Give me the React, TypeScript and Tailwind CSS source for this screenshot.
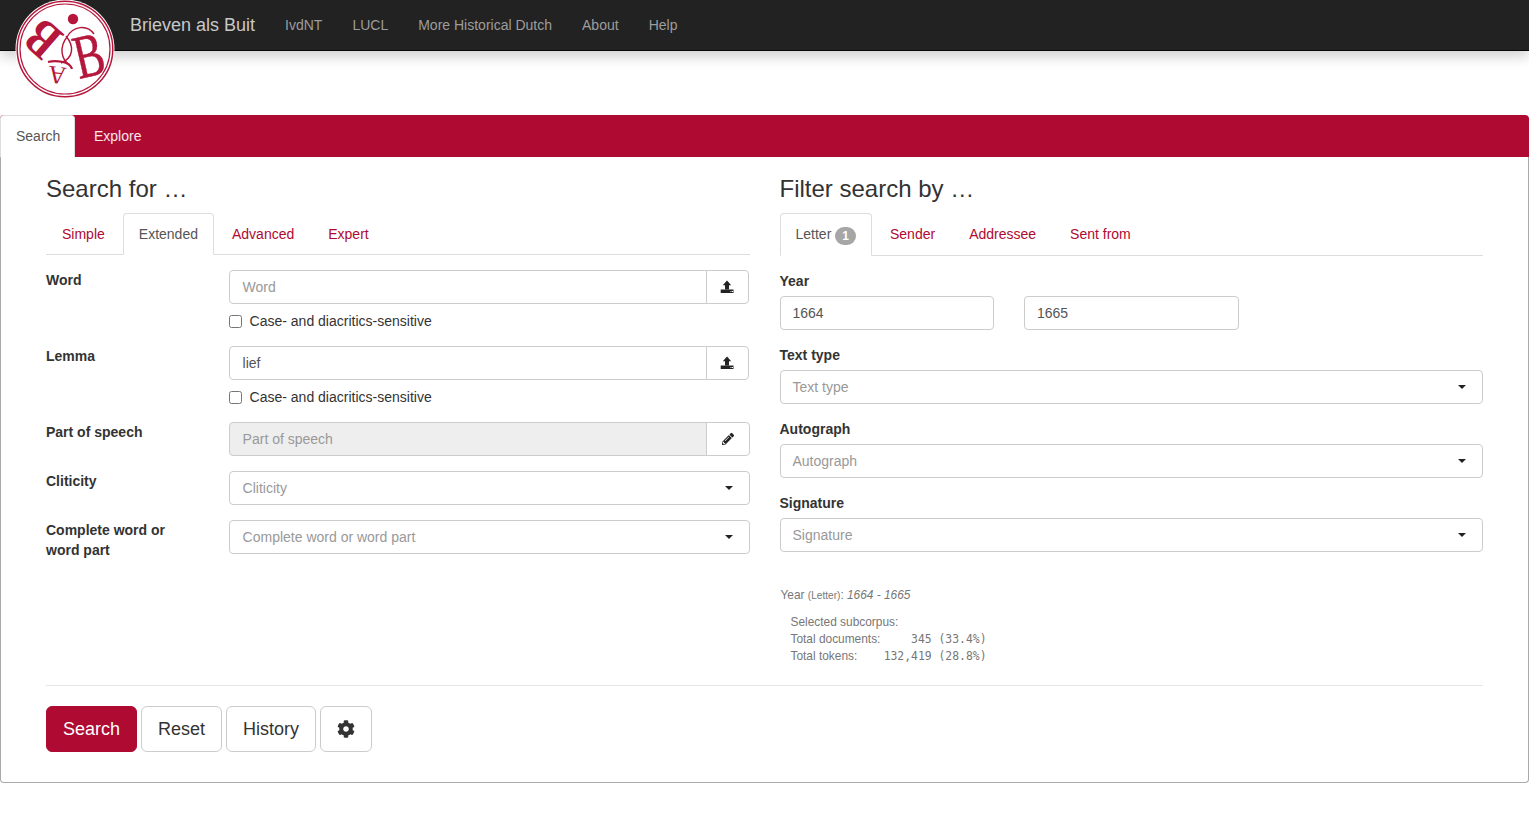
import { FaCog, FaPencilAlt } from "react-icons/fa";

const Upload = () => (
  <svg width="14" height="14" viewBox="0 0 14 14" fill="#222">
    <path d="M7 0.5 L11.2 5.2 H9 V9.5 H5 V5.2 H2.8 Z" />
    <path d="M0.7 9.5 H13.5 V13 H0.7 Z" />
    <path d="M10.5 11 h1 v1 h-1 z M12 11 h1 v1 h-1 z" fill="#fff" />
  </svg>
);

const Caret = () => <span className="w-0 h-0 border-x-[4px] border-x-transparent border-t-[4px] border-t-[#222]" />;

const red = "#b5173c";

const Logo = () => (
  <svg width="100" height="100" viewBox="0 0 100 100" className="absolute left-[15px] top-0">
    <circle cx="50" cy="49" r="49.5" fill="#fff" />
    <circle cx="50" cy="49" r="47.8" fill="none" stroke={red} strokeWidth="1.5" />
    <circle cx="50" cy="49" r="45" fill="none" stroke={red} strokeWidth="1.2" />
    <circle cx="58" cy="19" r="5.2" fill={red} />
    <text x="0" y="0" transform="translate(50 35) rotate(-139) scale(0.8 1)" fontFamily="Liberation Serif, serif" fontSize="53" fontWeight="700" fill={red}>B</text>
    <path d="M52 37 C58 26 72 24 79 34 M52 37 C44 47 46 60 55 65 M51 36 C60 47 58 58 46 63" fill="none" stroke={red} strokeWidth="1.4" />
    <path d="M33 62 C40 60 55 61 57 69" fill="none" stroke={red} strokeWidth="2.2" />
    <text x="0" y="0" transform="translate(64 79) rotate(-13) scale(0.72 1)" fontFamily="Liberation Serif, serif" fontSize="62" fill={red} stroke={red} strokeWidth="0.5">B</text>
    <text x="0" y="0" transform="translate(52 68) rotate(187)" fontFamily="Liberation Serif, serif" fontSize="25" fill={red}>A</text>
  </svg>
);

const Tab = ({ label, active, badge }: { label: string; active?: boolean; badge?: boolean }) =>
  active ? (
    <div className="-mb-px mr-[2px] px-[15px] py-[10px] border border-[#ddd] border-b-white rounded-t bg-white text-[#555] leading-5">
      {label}
      {badge && (
        <span className="inline-block ml-[4px] min-w-[10px] px-[7px] py-[3px] rounded-[10px] bg-[#a6a6a6] text-white text-xs font-bold leading-none align-[-1px]">1</span>
      )}
    </div>
  ) : (
    <div className="mr-[2px] px-[15px] py-[10px] border border-transparent text-[#ae0a32] leading-5">{label}</div>
  );

const Field = ({ placeholder, value, disabled }: { placeholder?: string; value?: string; disabled?: boolean }) => (
  <div className={`flex-1 min-w-0 h-[34px] pl-[12.6px] pr-3 border border-[#ccc] rounded-l flex items-center ${disabled ? "bg-[#eee]" : "bg-white"} ${value ? "text-[#555]" : "text-[#999]"}`}>
    {value ?? placeholder}
  </div>
);

const Check = () => (
  <label className="flex items-center h-5 mt-[7px] text-[#333]">
    <input type="checkbox" className="w-[13px] h-[13px] m-0 mr-[7.6px]" />
    Case- and diacritics-sensitive
  </label>
);

const Select = ({ text, left }: { text: string; left?: boolean }) => (
  <div className={`h-[34px] ${left ? "pl-[12.6px]" : "pl-3"} pr-3 border border-[#ccc] rounded bg-white flex items-center justify-between text-[#999]`}>
    <span>{text}</span>
    <span className="flex mr-[4px]"><Caret /></span>
  </div>
);

const Row = ({ label, children }: { label: string; children: React.ReactNode }) => (
  <div className="flex mb-[15px]">
    <div className="w-[183px] pr-[30px] font-bold text-[#333] leading-5 shrink-0">{label}</div>
    <div className="flex-1 min-w-0">{children}</div>
  </div>
);

const FilterLabel = ({ children }: { children: React.ReactNode }) => (
  <div className="font-bold text-[#333] leading-5 mb-[5px]">{children}</div>
);

export default function App() {
  return (
    <div className="min-h-[814px] bg-white text-sm leading-5 text-[#333] font-['Liberation_Sans',Arial,sans-serif]">
      <div className="relative h-[51px] bg-[#222] border-b border-[#080808] flex items-center pl-[115px] shadow-[0_6px_12px_rgba(0,0,0,0.175)]">
        <div className="px-[15px] text-lg text-[#c8c8c8] font-normal">Brieven als Buit</div>
        {["IvdNT", "LUCL", "More Historical Dutch", "About", "Help"].map((n) => (
          <div key={n} className="px-[15px] text-[#9d9d9d]">{n}</div>
        ))}
        <Logo />
      </div>

      <div className="mt-[64px] flex h-[42px] bg-[#ae0a32] rounded-t">
        <div className="w-[75px] mr-[3px] px-[15px] py-[10px] bg-white border border-[#ddd] border-b-white rounded-t text-[#555] leading-5 h-[42px]">Search</div>
        <div className="px-[15px] py-[10px] border border-transparent text-white/90 leading-5">Explore</div>
      </div>

      <div className="border border-t-0 border-[#aaa] rounded-b px-[45px] pt-[19px] pb-[30px]">
        <div className="grid grid-cols-2 gap-x-[30px]">
          <div>
            <h3 className="h-[27px] mb-[10px] text-2xl leading-[26px] font-normal text-[#333]">Search for …</h3>
            <div className="flex h-[42px] border-b border-[#ddd] mb-[15px]">
              <Tab label="Simple" />
              <Tab label="Extended" active />
              <Tab label="Advanced" />
              <Tab label="Expert" />
            </div>
            <Row label="Word">
              <div className="flex pr-px">
                <Field placeholder="Word" />
                <div className="-ml-px w-[43px] h-[34px] border border-[#ccc] rounded-r flex items-center justify-center"><Upload /></div>
              </div>
              <Check />
            </Row>
            <Row label="Lemma">
              <div className="flex pr-px">
                <Field value="lief" />
                <div className="-ml-px w-[43px] h-[34px] border border-[#ccc] rounded-r flex items-center justify-center"><Upload /></div>
              </div>
              <Check />
            </Row>
            <Row label="Part of speech">
              <div className="flex">
                <Field placeholder="Part of speech" disabled />
                <div className="-ml-px w-[44px] h-[34px] border border-[#ccc] rounded-r flex items-center justify-center"><FaPencilAlt size={12} color="#222" /></div>
              </div>
            </Row>
            <Row label="Cliticity"><Select left text="Cliticity" /></Row>
            <Row label="Complete word or word part"><Select left text="Complete word or word part" /></Row>
          </div>

          <div>
            <h3 className="h-[27px] mb-[10px] text-2xl leading-[26px] font-normal text-[#333]">Filter search by …</h3>
            <div className="flex h-[43px] border-b border-[#ddd] mb-[15px]">
              <Tab label="Letter" active badge />
              <Tab label="Sender" />
              <Tab label="Addressee" />
              <Tab label="Sent from" />
            </div>
            <FilterLabel>Year</FilterLabel>
            <div className="grid grid-cols-3 gap-x-[30px] mb-[15px]">
              <div className="h-[34px] px-3 border border-[#ccc] rounded flex items-center text-[#555]">1664</div>
              <div className="h-[34px] px-3 border border-[#ccc] rounded flex items-center text-[#555]">1665</div>
            </div>
            <FilterLabel>Text type</FilterLabel>
            <div className="mb-[15px]"><Select text="Text type" /></div>
            <FilterLabel>Autograph</FilterLabel>
            <div className="mb-[15px]"><Select text="Autograph" /></div>
            <FilterLabel>Signature</FilterLabel>
            <Select text="Signature" />

            <div className="mt-[35px] ml-px text-[#777] text-[11.9px] leading-[17px]">
              <div>Year <span className="text-[10.1px]">(Letter)</span>: <em>1664 - 1665</em></div>
              <div className="mt-[10px] pl-[10px]">
                <div>Selected subcorpus:</div>
                <div className="grid grid-cols-[93px_103px] w-[196px]">
                  <span>Total documents:</span>
                  <span className="text-right whitespace-nowrap font-['DejaVu_Sans_Mono',monospace] text-[11.4px]">345 (33.4%)</span>
                  <span>Total tokens:</span>
                  <span className="text-right whitespace-nowrap font-['DejaVu_Sans_Mono',monospace] text-[11.4px]">132,419 (28.8%)</span>
                </div>
              </div>
            </div>
          </div>
        </div>

        <hr className="mt-[20px] mb-[20px] border-t border-[#e6e6e6]" />

        <div className="flex gap-1 text-lg">
          <div className="h-[46px] px-4 flex items-center rounded-md border border-[#ae0a32] bg-[#ae0a32] text-white">Search</div>
          <div className="h-[46px] px-4 flex items-center rounded-md border border-[#ccc] text-[#333]">Reset</div>
          <div className="h-[46px] px-4 flex items-center rounded-md border border-[#ccc] text-[#333]">History</div>
          <div className="h-[46px] w-[52px] flex items-center justify-center rounded-md border border-[#ccc] text-[#333]"><FaCog size={18} /></div>
        </div>
      </div>
    </div>
  );
}
